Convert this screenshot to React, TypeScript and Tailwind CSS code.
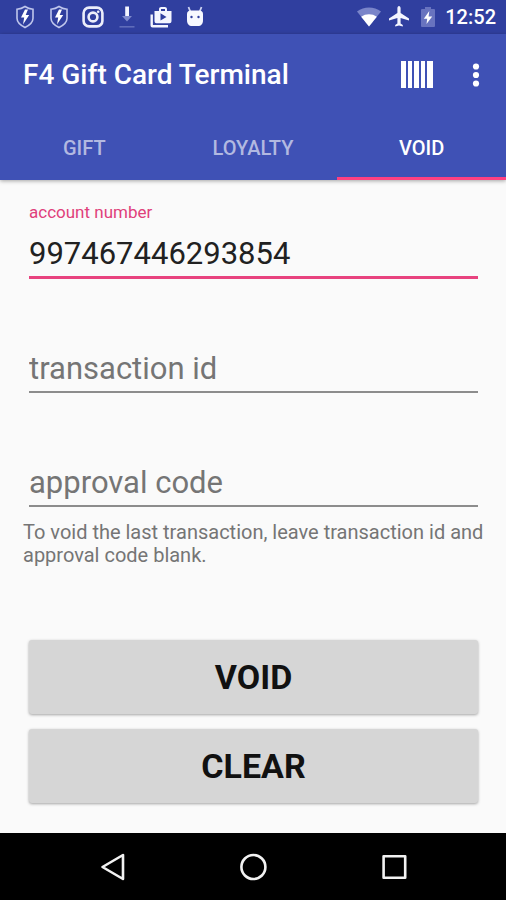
import { useState } from "react"

type TabId = "GIFT" | "LOYALTY" | "VOID"

const tabs: TabId[] = ["GIFT", "LOYALTY", "VOID"]

export default function App() {
  const [tab, setTab] = useState<TabId>("VOID")
  const [account, setAccount] = useState("997467446293854")
  const [transaction, setTransaction] = useState("")
  const [approval, setApproval] = useState("")

  const clear = () => {
    setAccount("")
    setTransaction("")
    setApproval("")
  }

  return (
    <div className="flex min-h-screen flex-col bg-[#fafafa] font-[Roboto,sans-serif]">
      <StatusBar />

      <header className="z-10 bg-[#3f51b5] text-white shadow-[0_1px_4px_rgba(0,0,0,0.35)]">
        <div className="flex h-[81px] items-center pr-4 pl-[23px]">
          <h1 className="flex-1 text-[28px] leading-8 font-medium">F4 Gift Card Terminal</h1>
          <button type="button" aria-label="Scan barcode" className="mr-7">
            <BarcodeIcon />
          </button>
          <button type="button" aria-label="More options" className="flex w-7 justify-center">
            <MoreIcon />
          </button>
        </div>
        <nav className="grid h-[65px] grid-cols-3">
          {tabs.map(t => (
            <button
              key={t}
              type="button"
              onClick={() => setTab(t)}
              className={
                t === tab
                  ? "border-b-3 border-[#ff4081] pt-[3px] text-xl leading-6 font-medium text-white"
                  : "border-b-3 border-transparent pt-[3px] text-xl leading-6 font-medium text-[#b2b9e1]"
              }
            >
              {t}
            </button>
          ))}
        </nav>
      </header>

      <main className="flex flex-1 flex-col pt-[22px]">
        <form className="flex flex-1 flex-col" onSubmit={e => e.preventDefault()}>
          <div className="flex flex-col gap-[37px] pr-7 pl-[29px]">
            <Field id="account" label="account number" value={account} onChange={setAccount} active />
            <Field id="transaction" label="transaction id" value={transaction} onChange={setTransaction} />
            <Field id="approval" label="approval code" value={approval} onChange={setApproval} />
          </div>
          <p className="mt-[14px] pr-4 pl-[23px] text-xl leading-[23px] text-[#757575]">
            To void the last transaction, leave transaction id and approval code blank.
          </p>
          <div className="mt-auto flex flex-col gap-[15px] pt-8 pr-7 pb-[30px] pl-[29px]">
            <ActionButton text="VOID" />
            <ActionButton text="CLEAR" onClick={clear} />
          </div>
        </form>
      </main>

      <SystemNav />
    </div>
  )
}

type FieldProps = {
  id: string
  label: string
  value: string
  onChange: (v: string) => void
  active?: boolean
}

// The label floats above the line only once there is a value, until then the placeholder stands in
function Field({ id, label, value, onChange, active }: FieldProps) {
  return (
    <div className="flex flex-col gap-[9px]">
      <label
        htmlFor={id}
        className={value ? "h-5 text-[17px] leading-5 text-[#e0407b]" : "h-5 text-[17px] leading-5 opacity-0"}
      >
        {label}
      </label>
      <input
        id={id}
        type="text"
        value={value}
        placeholder={label}
        onChange={e => onChange(e.target.value)}
        className={
          active
            ? "h-12 w-full border-b-3 border-[#e8437f] bg-transparent text-[31px] text-[#212121] outline-none placeholder:text-[#757575]"
            : "h-12 w-full border-b-2 border-[#8c8c8c] bg-transparent text-[31px] text-[#212121] outline-none placeholder:text-[#757575]"
        }
      />
    </div>
  )
}

function ActionButton({ text, onClick }: { text: string; onClick?: () => void }) {
  return (
    <button
      type="button"
      onClick={onClick}
      className="h-[74px] w-full rounded-[3px] bg-[#d6d6d6] text-[34px] leading-10 font-bold text-[#111111] shadow-[0_1px_3px_rgba(0,0,0,0.35)]"
    >
      {text}
    </button>
  )
}

function StatusBar() {
  return (
    <div className="flex h-[34px] items-center justify-between bg-[#303f9f] pr-[10px] pl-[14px] text-white">
      <div className="flex items-center gap-3">
        <ShieldIcon />
        <ShieldIcon />
        {/* camera */}
        <svg width="22" height="22" viewBox="0 0 22 22" fill="none" stroke="#eceefa" strokeWidth="2.6">
          <rect x="1.6" y="1.6" width="18.8" height="18.8" rx="5.5" />
          <circle cx="11" cy="11" r="4.4" />
          <circle cx="16.2" cy="5.8" r="1.3" fill="#eceefa" stroke="none" />
        </svg>
        {/* download */}
        <svg width="22" height="22" viewBox="0 0 22 22">
          <path d="M9.2 .5h3.800v9.500H9.200z" fill="#f4f5ff" />
          <path d="M6 10h10l-5 5.500z" fill="#7f8acd" />
          <path d="M3.500 20h15v1.600h-15z" fill="#5f6cba" />
        </svg>
        {/* play store bag */}
        <svg width="22" height="22" viewBox="0 0 22 22" fill="#f4f5ff">
          <path d="M.5 8.500h2.400v10.600H18v2.400H2.500a2 2 0 0 1-2-2z" />
          <path
            fillRule="evenodd"
            d="M4.500 5H9V3.200C9 1.800 10 1 11.200 1h3.600C16 1 17 1.800 17 3.200V5h4.500v10.200a2 2 0 0 1-2 2h-13a2 2 0 0 1-2-2zm6.500-2v2h4V3zM10.500 7.300v7.200l6-3.600z"
          />
        </svg>
        {/* robot head */}
        <svg width="22" height="22" viewBox="0 0 22 22">
          <path d="M4.500 1l2 5M17.500 1l-2 5" stroke="#cdd2f0" strokeWidth="1.800" />
          <path d="M3 8c0-2.200 1.500-3.500 3.500-3.500h9C17.500 4.500 19 5.800 19 8v6c0 4-2 6-5 6H8c-3 0-5-2-5-6z" fill="#f7f8ff" />
          <circle cx="7.500" cy="11" r="1.200" fill="#303f9f" />
          <circle cx="14.500" cy="11" r="1.200" fill="#303f9f" />
        </svg>
      </div>

      <div className="flex items-center">
        {/* wifi, outer part dimmed */}
        <svg width="24" height="20" viewBox="0 0 24 20">
          <path d="M12 19.500L0 4.500C7 -.8 17 -.8 24 4.500z" fill="#7a85c9" />
          <path d="M12 19.500L4.200 9.700c4.500-3.300 11.100-3.300 15.600 0z" fill="#fff" />
        </svg>
        <svg className="ml-[6px]" width="24" height="24" viewBox="0 0 24 24" fill="#f4f5ff">
          <path d="M22 15.500v-2.100l-8.400-5.300V3.100C13.600 2.200 12.900 1 12 1s-1.600 1.200-1.600 2.100v5L2 13.400v2.100l8.400-2.600v5.500l-2.200 1.500v1.600l3.800-1 3.800 1v-1.600l-2.200-1.500v-5.500z" />
        </svg>
        {/* battery charging */}
        <svg className="ml-[10px]" width="14" height="20" viewBox="0 0 14 20">
          <path d="M4 0h6v2h3a1 1 0 0 1 1 1v16a1 1 0 0 1-1 1H1a1 1 0 0 1-1-1V3a1 1 0 0 1 1-1h3z" fill="#6873bf" />
          <path d="M8.300 4L2.800 11.800h3.400l-.7 5.200 5.700-7.600H7.600z" fill="#fff" />
        </svg>
        <span className="ml-[10px] text-xl leading-6 font-medium">12:52</span>
      </div>
    </div>
  )
}

function ShieldIcon() {
  return (
    <svg width="22" height="24" viewBox="0 0 22 24">
      <path
        d="M11 1.500c2.500 1.600 5 2.400 8 2.700v9c0 4-3.500 7-8 9.300-4.500-2.300-8-5.300-8-9.300v-9c3-.3 5.500-1.100 8-2.700z"
        fill="none"
        stroke="#bfc6ec"
        strokeWidth="1.600"
      />
      <path d="M11 4.500L7 12.500h3.200L9 19.500l6.200-9.500h-3.500L14 4.500z" fill="#fff" />
    </svg>
  )
}

function BarcodeIcon() {
  return (
    <svg width="33" height="27" viewBox="0 0 33 27" fill="#fff">
      <path d="M0 0h5v27H0zM7 0h4v27H7zM13 0h5v27h-5zM20 0h4v27h-4zM26 0h6v27h-6z" />
    </svg>
  )
}

function MoreIcon() {
  return (
    <svg width="8" height="24" viewBox="0 0 8 24" fill="#fff">
      <circle cx="4" cy="3.500" r="3.100" />
      <circle cx="4" cy="12" r="3.100" />
      <circle cx="4" cy="20.500" r="3.100" />
    </svg>
  )
}

function SystemNav() {
  return (
    <footer className="flex h-[67px] justify-center bg-black">
      <button type="button" aria-label="Back" className="flex w-[28%] items-center justify-center">
        <svg width="28" height="28" viewBox="0 0 28 28" fill="none" stroke="#f2f2f2" strokeWidth="2.600" strokeLinejoin="round">
          <path d="M26 2v24L5.500 14z" />
        </svg>
      </button>
      <button type="button" aria-label="Home" className="flex w-[28%] items-center justify-center">
        <svg width="28" height="28" viewBox="0 0 28 28" fill="none" stroke="#f2f2f2" strokeWidth="2.600">
          <circle cx="14.400" cy="14" r="12" />
        </svg>
      </button>
      <button type="button" aria-label="Recent apps" className="flex w-[28%] items-center justify-center">
        <svg width="28" height="28" viewBox="0 0 28 28" fill="none" stroke="#f2f2f2" strokeWidth="2.600" strokeLinejoin="round">
          <rect x="2.600" y="3.200" width="21.600" height="21.600" />
        </svg>
      </button>
    </footer>
  )
}
